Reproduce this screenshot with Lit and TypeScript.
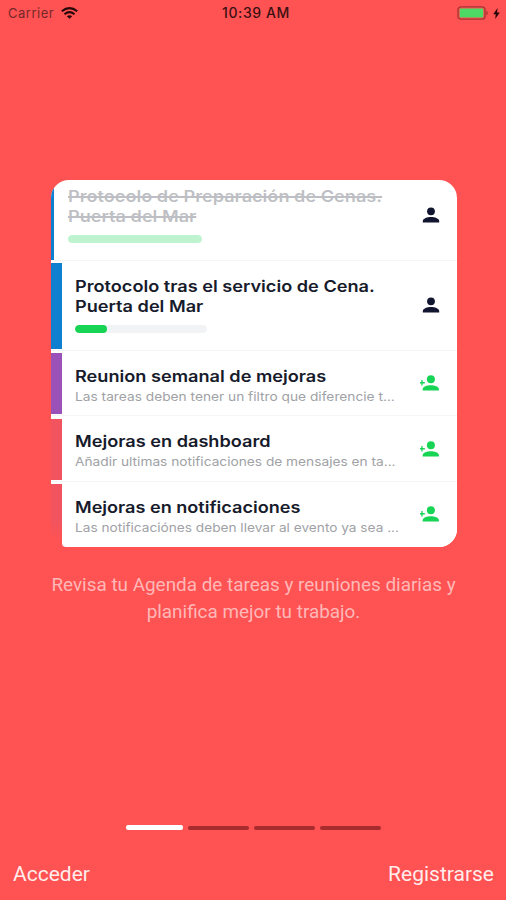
import { LitElement, html, css, nothing } from "lit";
import { customElement } from "lit/decorators.js";
import { classMap } from "lit/directives/class-map.js";
import { styleMap } from "lit/directives/style-map.js";

interface Task {
  lines: string[];
  scale: number;
  note?: string;
  noteScale?: number;
  progress?: number;
  kind: string;
  assigned: boolean;
}

const tasks: Task[] = [
  { lines: ["Protocolo de Preparación de Cenas.", "Puerta del Mar"], scale: 1.134, progress: 100, kind: "done", assigned: true },
  { lines: ["Protocolo tras el servicio de Cena.", "Puerta del Mar"], scale: 1.134, progress: 24, kind: "blue", assigned: true },
  { lines: ["Reunion semanal de mejoras"], scale: 1.134, note: "Las tareas deben tener un filtro que diferencie t...", noteScale: 1.144, kind: "purple", assigned: false },
  { lines: ["Mejoras en dashboard"], scale: 1.134, note: "Añadir ultimas notificaciones de mensajes en ta...", noteScale: 1.142, kind: "red", assigned: false },
  { lines: ["Mejoras en notificaciones"], scale: 1.13, note: "Las notificaciónes deben llevar al evento ya sea ...", noteScale: 1.138, kind: "red last", assigned: false },
];

@customElement("app-root")
export class AppRoot extends LitElement {
  static styles = css`
    :host {
      display: flex;
      flex-direction: column;
      width: 506px;
      height: 900px;
      box-sizing: border-box;
      overflow: hidden;
      background: #ff5252;
      font-family: Inter, "Liberation Sans", sans-serif;
    }
    .status {
      display: grid;
      grid-template-columns: 214px auto 1fr;
      align-items: center;
      height: 26px;
      padding: 0 6px 0 8px;
      font-size: 13px;
      line-height: 26px;
      color: #3b1012;
    }
    .carrier { display: flex; align-items: center; gap: 7px; color: #76282a; letter-spacing: 0.5px; }
    .clock { font-size: 14px; font-weight: 500; letter-spacing: 0.6px; }
    .power { display: flex; justify-content: flex-end; align-items: center; gap: 4px; }
    svg { display: block; flex: none; }
    .card {
      width: 405.5px;
      height: 367px;
      margin: 153.5px 0 0 51px;
      border-radius: 18px 18px 18px 0;
      overflow: hidden;
      background: linear-gradient(90deg, #ff5252 18px, #fff 18px) 0 100% / 100% 6px no-repeat, #fff;
    }
    .row {
      display: flex;
      box-sizing: border-box;
      height: 65.5px;
      border-bottom: 1.5px solid #f3f5f6;
    }
    .row.done { height: 81px; }
    .row.blue { height: 90px; }
    .row.last { border-bottom: 0; }
    .strip { width: 11px; margin: 2.5px 0 1px 0; flex: none; background: #0f7fd0; }
    .done .strip { width: 3px; margin: 0; }
    .purple .strip { background: #9b52b8; }
    .red .strip { background: #f2545f; }
    .last .strip { margin-bottom: 0; background: linear-gradient(#f2545f 60%, #ff5252 90%); }
    .body { flex: 1; min-width: 0; padding: 14px 0 0 13px; }
    .last .body { background: #fff; border-bottom-left-radius: 4px; }
    .last .icon { background: #fff; }
    .blue .body { padding-top: 15px; }
    .done .body { padding: 6px 0 0 14px; opacity: 0.28; }
    .title {
      display: block;
      width: max-content;
      font-size: 16px;
      font-weight: 600;
      line-height: 20px;
      color: #171b2b;
      white-space: nowrap;
      transform-origin: 0 50%;
    }
    .done .title { text-decoration: line-through; text-decoration-thickness: 1.5px; }
    .purple .title, .red .title { line-height: 23px; }
    .note {
      display: block;
      width: max-content;
      font-size: 12px;
      line-height: 17px;
      color: #a0a2a6;
      white-space: nowrap;
      transform-origin: 0 50%;
    }
    .track { width: 132px; height: 8px; margin-top: 9px; border-radius: 4px; background: #f2f3f5; overflow: hidden; }
    .done .track { width: 134px; }
    .fill { height: 100%; border-radius: 4px; background: #17d455; }
    .icon { width: 22px; padding-right: 15px; display: flex; align-items: center; color: #121530; }
    .done .icon { margin-top: -10px; }
    .red:not(.last) .icon { margin-top: 1px; }
    .intro {
      margin: 24.5px 0 0 1px;
      text-align: center;
      font-family: Roboto, sans-serif;
      font-size: 18.9px;
      line-height: 27px;
      color: #ffb8b8;
    }
    .line { display: block; }
    .pager { display: flex; gap: 5px; margin: auto 0 0 126px; align-items: center; height: 6px; }
    .page { width: 61px; height: 4px; border-radius: 2px; background: #a82b2d; }
    .page.on { width: 57px; height: 5px; background: #fff; }
    .actions {
      display: flex;
      justify-content: space-between;
      padding: 27px 12px 0 13px;
      height: 42.5px;
      font-family: Roboto, sans-serif;
      font-size: 21px;
      line-height: 33px;
      color: #ffecec;
    }
  `;

  private icon(t: Task) {
    return t.assigned
      ? html`<svg width="22" height="22" viewBox="0 0 22 22" fill="currentColor">
          <circle cx="11" cy="7.3" r="3.9" />
          <path d="M2.8 18.5v-1.4c0-2.6 4.6-4.1 8.2-4.1s8.2 1.5 8.2 4.1v1.4z" />
        </svg>`
      : html`<svg width="22" height="22" viewBox="0 0 22 22" fill="#17d455">
          <circle cx="10.9" cy="7.3" r="4" />
          <path d="M2.7 18.5v-1.3c0-2.6 4.5-4 8.1-4s8.1 1.4 8.1 4v1.3z" />
          <path d="M1.3 7.9h1.3v2.200h2.200v1.300h-2.200v2.200H1.300v-2.200h-2.200v-1.300h2.200z" overflow="visible" />
        </svg>`;
  }

  private row(t: Task) {
    const kinds = Object.fromEntries(t.kind.split(" ").map((k) => [k, true]));
    return html`<div class=${classMap({ row: true, ...kinds })}>
      <div class="strip"></div>
      <div class="body">
        ${t.lines.map((l) => html`<span class="title" style=${styleMap({ transform: `scaleX(${t.scale})` })}>${l}</span>`)}
        ${t.note ? html`<span class="note" style=${styleMap({ transform: `scaleX(${t.noteScale})` })}>${t.note}</span>` : nothing}
        ${t.progress !== undefined
          ? html`<div class="track"><div class="fill" style=${styleMap({ width: `${t.progress}%` })}></div></div>`
          : nothing}
      </div>
      <div class="icon">${this.icon(t)}</div>
    </div>`;
  }

  render() {
    return html`
      <div class="status">
        <div class="carrier">
          <span>Carrier</span>
          <svg width="17" height="12" viewBox="0 0 17 12" fill="none" stroke="#260709" stroke-width="2.1">
            <path d="M.8 4.3Q8.5-2.1 16.2 4.3M3.5 7.2Q8.5 3.2 13.5 7.2" />
            <path d="M8.5 11.8 5.8 9.2Q8.5 7.2 11.2 9.2z" fill="#260709" stroke="none" />
          </svg>
        </div>
        <span class="clock">10:39 AM</span>
        <div class="power">
          <svg width="32" height="14" viewBox="0 0 32 14">
            <rect x="1" y=".8" width="27" height="12.4" rx="3" fill="none" stroke="#a83434" stroke-width="1.3" />
            <rect x="2.7" y="2.5" width="23.6" height="9" rx="1" fill="#4cd964" />
            <path d="M29.3 4.5q3 2.5 0 5z" fill="#a83434" />
          </svg>
          <svg width="7" height="11" viewBox="0 0 6 10"><path d="M4 0 0 5.7h2.3L1.8 10 6 4.2H3.5z" fill="#260709" /></svg>
        </div>
      </div>
      <div class="card">${tasks.map((t) => this.row(t))}</div>
      <p class="intro">
        <span class="line">Revisa tu Agenda de tareas y reuniones diarias y</span>
        <span class="line">planifica mejor tu trabajo.</span>
      </p>
      <div class="pager">
        ${[0, 1, 2, 3].map((i) => html`<div class=${classMap({ page: true, on: i === 0 })}></div>`)}
      </div>
      <div class="actions"><span>Acceder</span><span>Registrarse</span></div>
    `;
  }
}
